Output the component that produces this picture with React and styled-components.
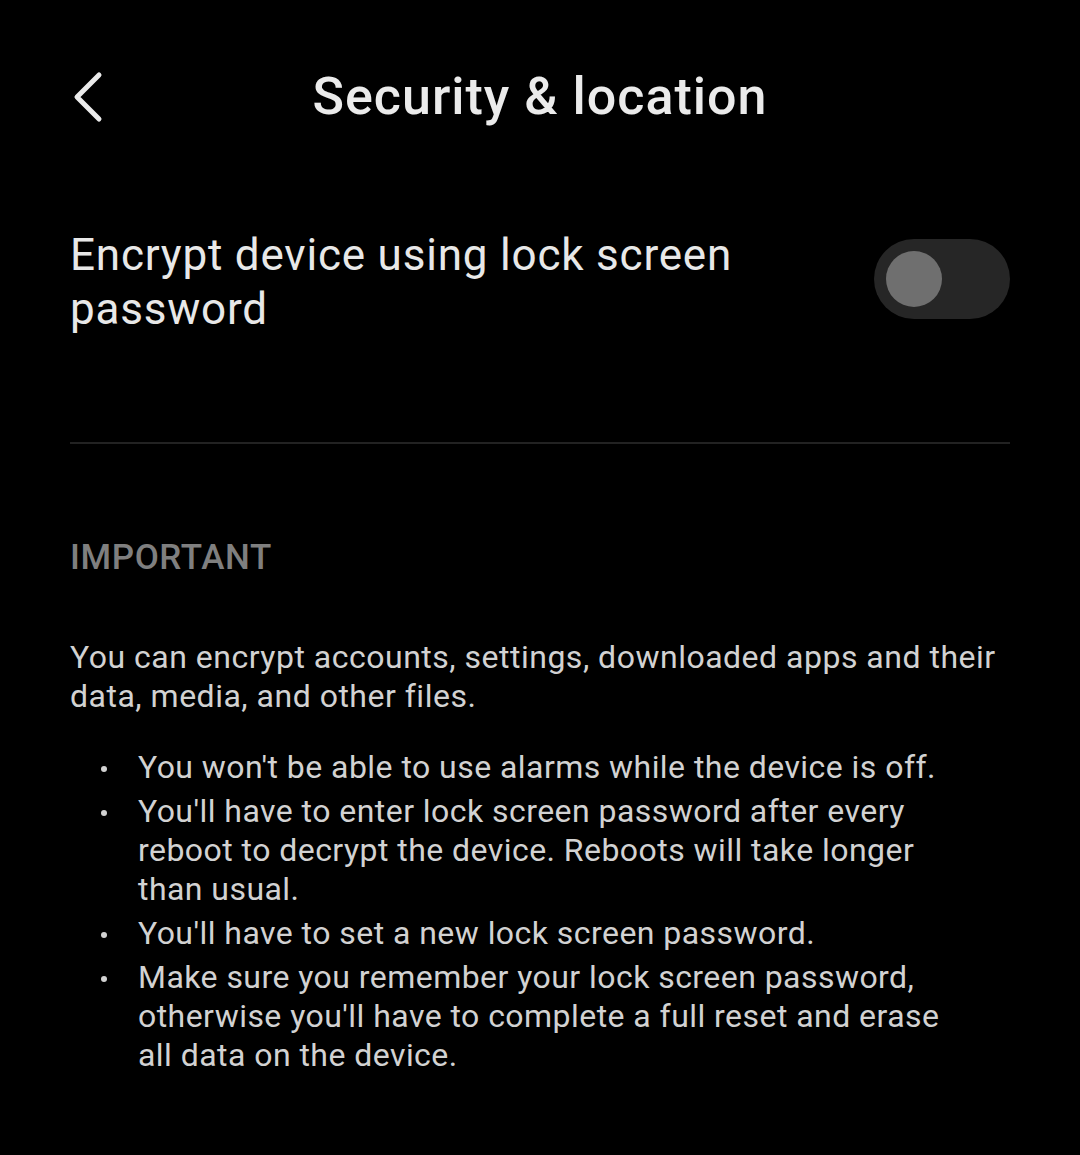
import React, {useState} from 'react'
import styled, {createGlobalStyle} from 'styled-components'

const notes = [
    "You won't be able to use alarms while the device is off.",
    "You'll have to enter lock screen password after every reboot to decrypt the device. Reboots will take longer than usual.",
    "You'll have to set a new lock screen password.",
    "Make sure you remember your lock screen password, otherwise you'll have to complete a full reset and erase all data on the device.",
]

const App = () => {
    const [encrypt, setEncrypt] = useState(false)

    return (
        <Page>
        <GlobalStyle />
        <Header>
            <BackButton aria-label="Back">
                <svg width="34" height="52" viewBox="0 0 34 52" fill="none">
                    <path d="M27 4 L5 26 L27 48" stroke="#ebebeb" strokeWidth="5" strokeLinecap="round" strokeLinejoin="round" />
                </svg>
            </BackButton>
            <Title>Security &amp; location</Title>
        </Header>

        <SettingRow>
            <SettingLabel>Encrypt device using lock screen password</SettingLabel>
            <Toggle on={encrypt} onClick={() => setEncrypt(!encrypt)}>
                <Thumb on={encrypt} />
            </Toggle>
        </SettingRow>

        <Divider />

        <SectionTag>IMPORTANT</SectionTag>
        <Paragraph>
            You can encrypt accounts, settings, downloaded apps and their data, media, and other files.
        </Paragraph>
        <NoteList>
            {notes.map(note => (
                <Note key={note}>{note}</Note>
            ))}
        </NoteList>
        </Page>
    )
}

export default App

const GlobalStyle = createGlobalStyle`
body {
    margin: 0;
    background: #000;
    font-family: Roboto, "Noto Sans", sans-serif;
}
`
const Page = styled.div`
min-height: 1155px;
background: #000;
padding: 0 70px;
box-sizing: border-box;
`
const Header = styled.div`
display: grid;
grid-template-columns: 1fr auto 1fr;
align-items: center;
height: 194px;
`
const BackButton = styled.button`
justify-self: start;
display: flex;
background: none;
border: none;
padding: 0;
margin-left: 2px;
cursor: pointer;
`
const Title = styled.h1`
margin: 0;
color: #ebebeb;
font-size: 52px;
font-weight: 500;
letter-spacing: 1px;
line-height: 60px;
`
const SettingRow = styled.div`
display: flex;
align-items: center;
justify-content: space-between;
padding: 34px 0 106px;
`
const SettingLabel = styled.div`
max-width: 740px;
color: #e8e8e8;
font-size: 44px;
letter-spacing: 0.8px;
line-height: 54px;
`
const Toggle = styled.button`
flex-shrink: 0;
display: flex;
align-items: center;
width: 136px;
height: 80px;
border-radius: 40px;
border: none;
padding: 0 12px;
margin-top: -6px;
background: ${props => props.on ? "#3d6fd8" : "#262626"};
cursor: pointer;
`
const Thumb = styled.span`
width: 56px;
height: 56px;
border-radius: 50%;
background: ${props => props.on ? "#fff" : "#6f6f6f"};
margin-left: ${props => props.on ? "auto" : "0"};
`
const Divider = styled.hr`
margin: 0;
border: none;
height: 2px;
background: #222;
`
const SectionTag = styled.h3`
margin: 93px 0 0;
color: #7f7f7f;
font-size: 35px;
font-weight: 500;
letter-spacing: 0.6px;
line-height: 42px;
`
const Paragraph = styled.p`
margin: 59px 0 0;
color: #d2d2d2;
font-size: 32px;
letter-spacing: 0.5px;
line-height: 39px;
`
const NoteList = styled.ul`
list-style: none;
margin: 32px 40px 0 0;
padding: 0;
`
const Note = styled.li`
position: relative;
padding-left: 68px;
margin-bottom: 5px;
color: #d2d2d2;
font-size: 32px;
letter-spacing: 0.45px;
line-height: 39px;
&::before {
    content: "";
    position: absolute;
    left: 31px;
    top: 18px;
    width: 6px;
    height: 6px;
    border-radius: 50%;
    background: #d2d2d2;
}
`
